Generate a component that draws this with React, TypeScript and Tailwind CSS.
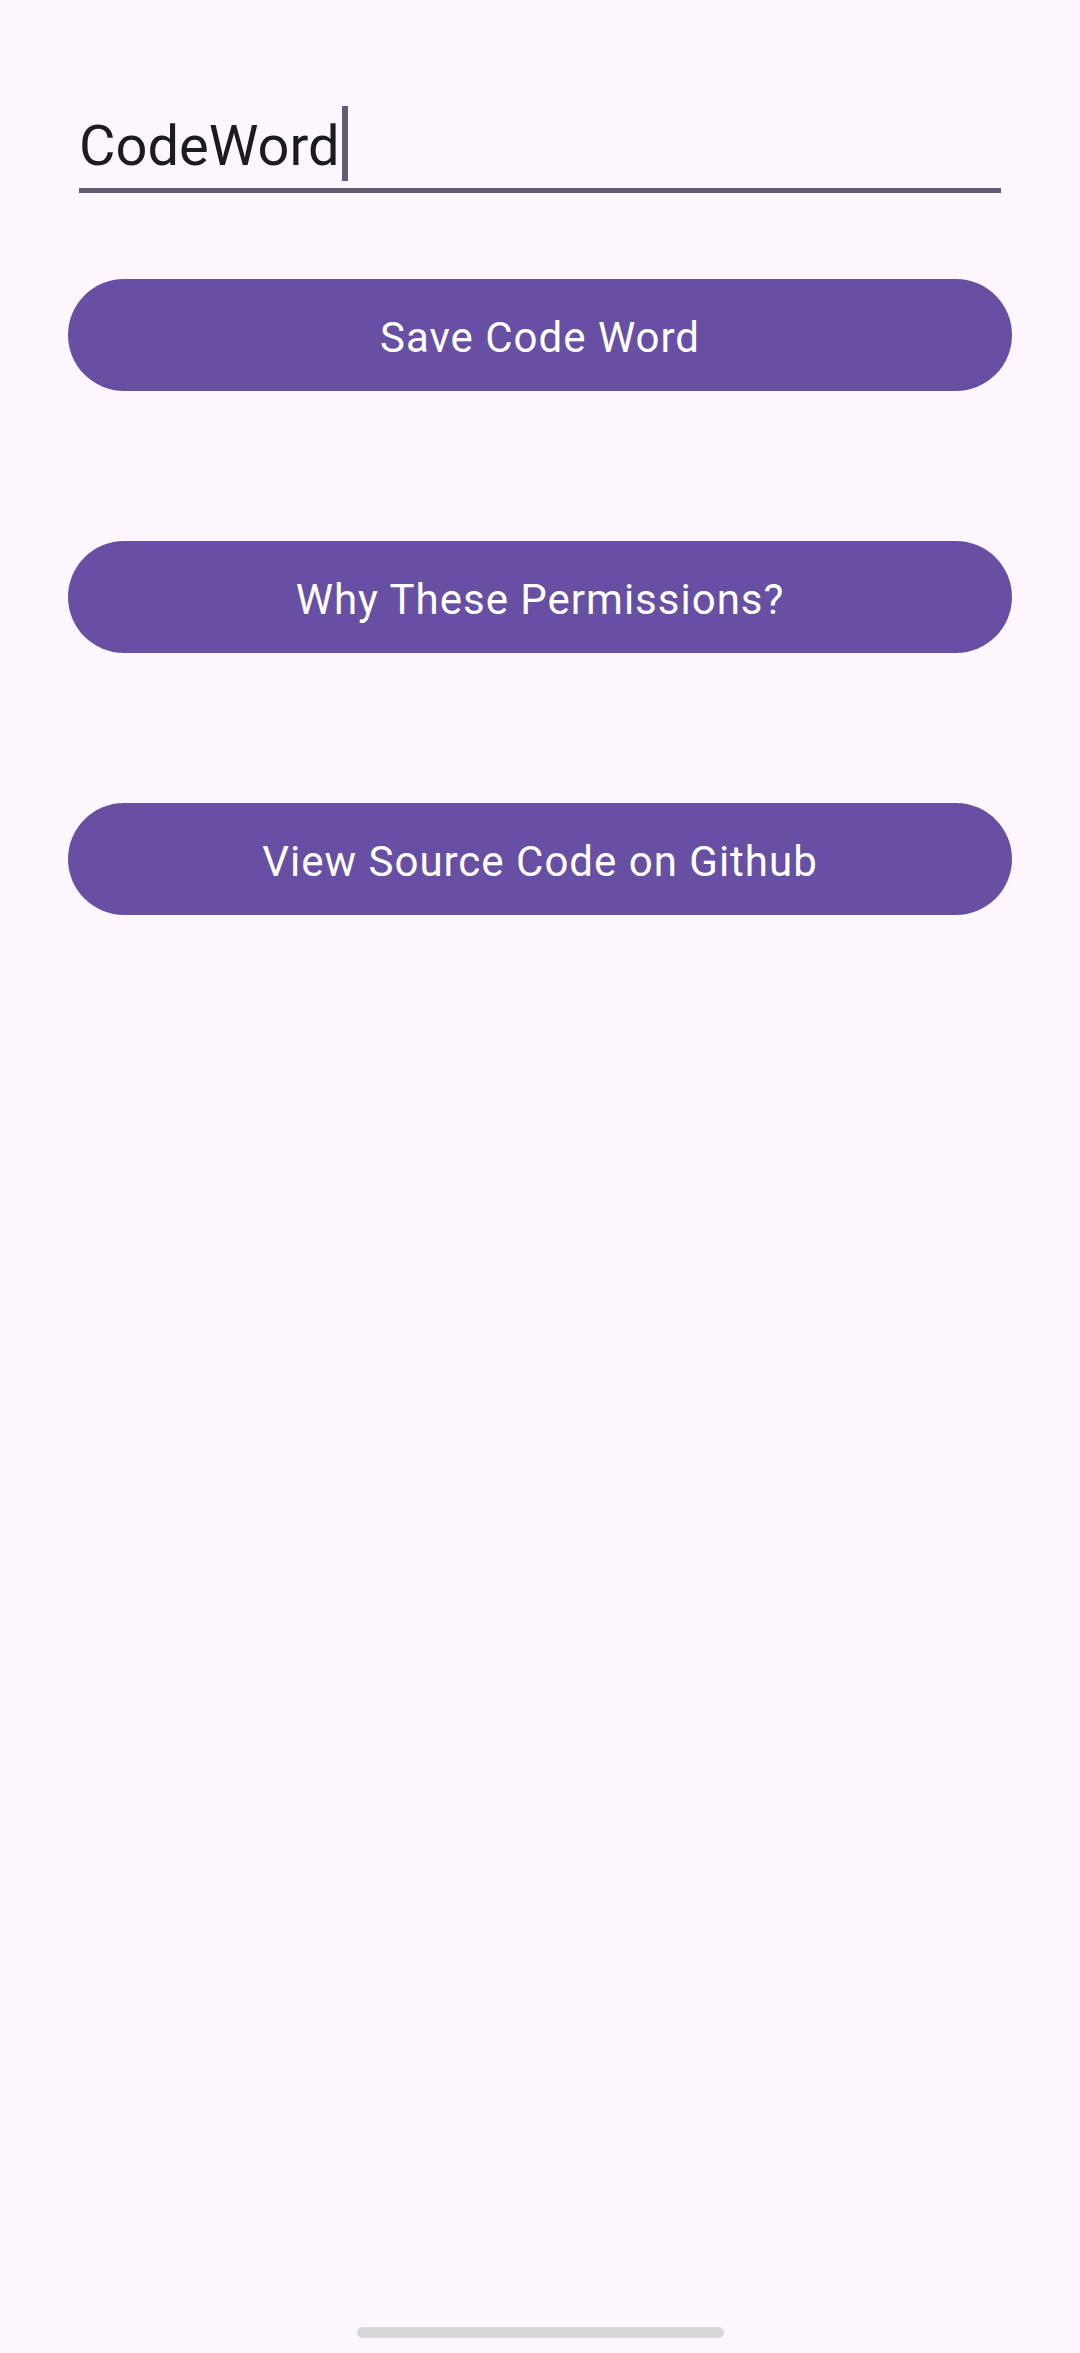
import React from "react";

const buttons = ["Save Code Word", "Why These Permissions?", "View Source Code on Github"];

export default function App() {
  return (
    <div
      className="flex h-[2353px] w-full flex-col bg-[#fef7ff]"
      style={{ fontFamily: "Roboto, 'Noto Sans', sans-serif" }}
    >
      {/* code word field */}
      <div className="mx-[79px] pt-[106px]">
        <div className="flex items-start">
          <span className="text-[56px] leading-[81px] text-[#1d1b20]">CodeWord</span>
          <span className="ml-[3px] h-[75px] w-[6px] bg-[#625b71]"></span>
        </div>
        <div className="mt-[1px] h-[5px] w-full bg-[#625b71]"></div>
      </div>

      <div className="mx-[68px] mt-[86px] flex flex-col gap-[150px]">
        {buttons.map((label) => (
          <button
            key={label}
            className="flex h-[112px] w-full items-center justify-center rounded-full bg-[#6750a4] pt-[4px] text-[42px] tracking-[1px] text-white"
          >
            {label}
          </button>
        ))}
      </div>

      <div className="mt-auto mb-[15px] flex justify-center">
        <div className="h-[11px] w-[367px] rounded-full bg-[#dad7dc]"></div>
      </div>
    </div>
  );
}
